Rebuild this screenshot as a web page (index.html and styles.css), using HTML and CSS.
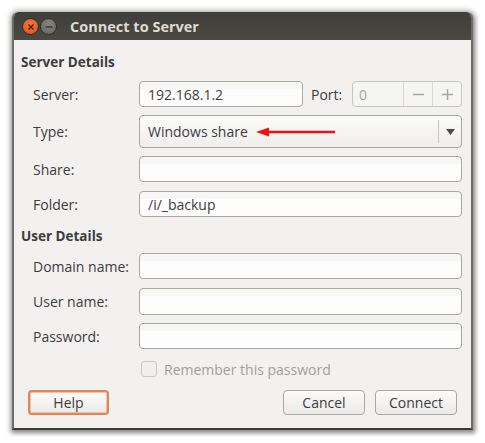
FILE: index.html
```html
<!DOCTYPE html>
<html>
<head>
<meta charset="utf-8">
<link rel="stylesheet" href="styles.css">
</head>
<body>
<div class="window">
  <div class="titlebar">
    <span class="tb-btn close"><svg width="8" height="8" viewBox="0 0 8 8"><path d="M1.5 1.5 L6.5 6.5 M6.5 1.5 L1.5 6.5" stroke="#3a1a0c" stroke-width="1.2"/></svg></span>
    <span class="tb-btn min"><svg width="8" height="8" viewBox="0 0 8 8"><path d="M0.5 4 H7.5" stroke="#3b3b38" stroke-width="1.4"/></svg></span>
    <span class="title">Connect to Server</span>
  </div>
  <div class="content">
    <div class="section-title first">Server Details</div>
    <div class="row r-server">
      <span class="label">Server:</span>
      <div class="entry server-entry">192.168.1.2</div>
      <span class="port-label">Port:</span>
      <div class="spin">
        <span class="spin-val">0</span>
        <span class="spin-btn"><svg width="11" height="11" viewBox="0 0 11 11"><path d="M0 5.5 H11" stroke="#a7a7a5" stroke-width="1.5"/></svg></span>
        <span class="spin-btn"><svg width="11" height="11" viewBox="0 0 11 11"><path d="M0 5.5 H11 M5.5 0 V11" stroke="#a7a7a5" stroke-width="1.5"/></svg></span>
      </div>
    </div>
    <div class="row r-type">
      <span class="label">Type:</span>
      <div class="combo">
        <span class="combo-text">Windows share</span>
        <svg class="red-arrow" width="80" height="10" viewBox="0 0 80 10"><path d="M10 5 H79" stroke="#ee1111" stroke-width="2.6"/><path d="M0 5 L13 0.5 L13 9.5 Z" fill="#ee1111"/></svg>
        <span class="combo-sep"></span>
        <span class="combo-arrow"><svg width="9" height="6" viewBox="0 0 9 6"><path d="M0 0 H9 L4.5 6 Z" fill="#4c4c4a"/></svg></span>
      </div>
    </div>
    <div class="row r-share">
      <span class="label">Share:</span>
      <div class="entry"></div>
    </div>
    <div class="row r-folder">
      <span class="label">Folder:</span>
      <div class="entry">/i/_backup</div>
    </div>
    <div class="section-title second">User Details</div>
    <div class="row r-domain">
      <span class="label">Domain name:</span>
      <div class="entry"></div>
    </div>
    <div class="row r-user">
      <span class="label">User name:</span>
      <div class="entry"></div>
    </div>
    <div class="row r-pass">
      <span class="label">Password:</span>
      <div class="entry"></div>
    </div>
    <div class="check-row">
      <span class="checkbox"></span>
      <span class="check-label">Remember this password</span>
    </div>
    <div class="buttons">
      <button class="btn help">Help</button>
      <span class="spacer"></span>
      <button class="btn cancel">Cancel</button>
      <button class="btn connect">Connect</button>
    </div>
  </div>
</div>
</body>
</html>
```
FILE: styles.css
```css
html, body {
  margin: 0;
  padding: 0;
  background: #ffffff;
  width: 485px;
  height: 443px;
  overflow: hidden;
}
body {
  font-family: "Open Sans", "DejaVu Sans", sans-serif;
  font-size: 14px;
  color: #3c3c3c;
}
.window {
  margin: 12px 0 0 12px;
  width: 461px;
  height: 418px;
  box-sizing: border-box;
  border-radius: 6px 6px 0 0;
  background: #f2f1f0;
  box-shadow: 0 0 5px 3px rgba(0,0,0,0.18), 1px 2px 4px 1px rgba(0,0,0,0.35);
  border-left: 2px solid #6c6b67;
  border-right: 2px solid #6c6b67;
  border-bottom: 2px solid #3b3a37;
  display: flex;
  flex-direction: column;
  overflow: hidden;
}
.titlebar {
  height: 28px;
  flex: none;
  background: linear-gradient(#3f3e3a, #4a4944);
  display: flex;
  align-items: center;
  padding-left: 10px;
  margin: 0 -2px;
  border-radius: 6px 6px 0 0;
}
.tb-btn {
  width: 17px;
  height: 17px;
  border-radius: 50%;
  display: flex;
  align-items: center;
  justify-content: center;
  box-sizing: border-box;
  margin-top: 1px;
}
.tb-btn.close {
  background: radial-gradient(circle at 50% 35%, #f2773f, #d9521b);
  border: 1px solid #2f2e2b;
}
.tb-btn.min {
  margin-left: 1px;
  background: radial-gradient(circle at 50% 35%, #85847f, #64635f);
  border: 1px solid #2f2e2b;
}
.title {
  margin-left: 13px;
  font-family: "Open Sans", "DejaVu Sans", sans-serif;
  font-weight: bold;
  font-size: 14.5px;
  color: #dfdbd2;
  margin-top: 1px;
}
.content {
  flex: 1;
  padding: 0 9px 0 7px;
  display: flex;
  flex-direction: column;
}
.section-title {
  font-weight: bold;
  font-size: 13.5px;
  height: 18px;
  line-height: 18px;
  color: #3c3c3c;
}
.section-title.first { margin-top: 13px; }
.section-title.second { margin-top: 10px; }
.row {
  display: flex;
  align-items: center;
  height: 26px;
}
.label {
  width: 118px;
  padding-left: 12px;
  flex: none;
  box-sizing: border-box;
  font-size: 14px;
}
.r-server { margin-top: 10px; height: 26px; }
.r-type { margin-top: 8px; height: 33px; }
.r-share { margin-top: 8px; }
.r-folder { margin-top: 9px; }
.r-domain { margin-top: 8px; }
.r-user { margin-top: 9px; height: 27px; }
.r-pass { margin-top: 8px; }
.entry {
  flex: 1;
  height: 100%;
  box-sizing: border-box;
  border: 1px solid #a9a8a5;
  border-radius: 4px;
  background: linear-gradient(#f7f7f6 0, #f7f7f6 30%, #fcfcfc 30%, #fcfcfc);
  padding-left: 8px;
  display: flex;
  align-items: center;
  font-size: 14px;
  color: #3c3c3c;
}
.server-entry {
  flex: none;
  width: 164px;
}
.port-label {
  margin-left: 8px;
  width: 41px;
  font-size: 14px;
}
.spin {
  flex: 1;
  height: 100%;
  box-sizing: border-box;
  border: 1px solid #c7c6c3;
  border-radius: 4px;
  background: #f5f5f4;
  display: flex;
  align-items: stretch;
}
.spin-val {
  flex: 1;
  padding-left: 6px;
  display: flex;
  align-items: center;
  color: #a6a6a4;
  font-size: 14px;
}
.spin-btn {
  width: 28px;
  border-left: 1px solid #d8d7d4;
  display: flex;
  align-items: center;
  justify-content: center;
}
.combo {
  flex: 1;
  height: 100%;
  box-sizing: border-box;
  border: 1px solid #a9a8a5;
  border-radius: 4px;
  background: linear-gradient(#fbfbfa, #efeeed);
  display: flex;
  align-items: center;
  padding-left: 8px;
  position: relative;
}
.combo-text {
  font-size: 14px;
  color: #3c3c3c;
}
.red-arrow {
  position: absolute;
  left: 116px;
  top: 11px;
}
.combo-sep {
  margin-left: auto;
  width: 1px;
  align-self: stretch;
  margin-top: 4px;
  margin-bottom: 4px;
  background: #c5c4c1;
}
.combo-arrow {
  width: 22px;
  display: flex;
  justify-content: center;
  align-items: center;
}
.check-row {
  display: flex;
  align-items: center;
  margin-top: 12px;
  padding-left: 120px;
  height: 16px;
}
.checkbox {
  width: 14px;
  height: 14px;
  border: 1px solid #c9c8c5;
  border-radius: 3px;
  background: #f0efee;
}
.check-label {
  margin-left: 7px;
  color: #a09f9c;
  font-size: 14px;
}
.buttons {
  display: flex;
  align-items: center;
  margin-top: 13px;
  padding-left: 7px;
  padding-right: 5px;
}
.spacer { flex: 1; }
.btn {
  font-family: "Open Sans", "DejaVu Sans", sans-serif;
  font-size: 14px;
  color: #3c3c3c;
  height: 25px;
  box-sizing: border-box;
  border: 1px solid #a9a8a5;
  border-radius: 4px;
  background: linear-gradient(#fbfbfa, #ebeae8);
  padding: 0;
  margin: 0;
  display: flex;
  align-items: center;
  justify-content: center;
}
.btn.help {
  width: 81px;
  border: 2px solid #e0845a;
  box-shadow: inset 0 0 0 1px #f2c3a8;
}
.btn.cancel { width: 82px; }
.btn.connect { width: 82px; margin-left: 10px; }
```
